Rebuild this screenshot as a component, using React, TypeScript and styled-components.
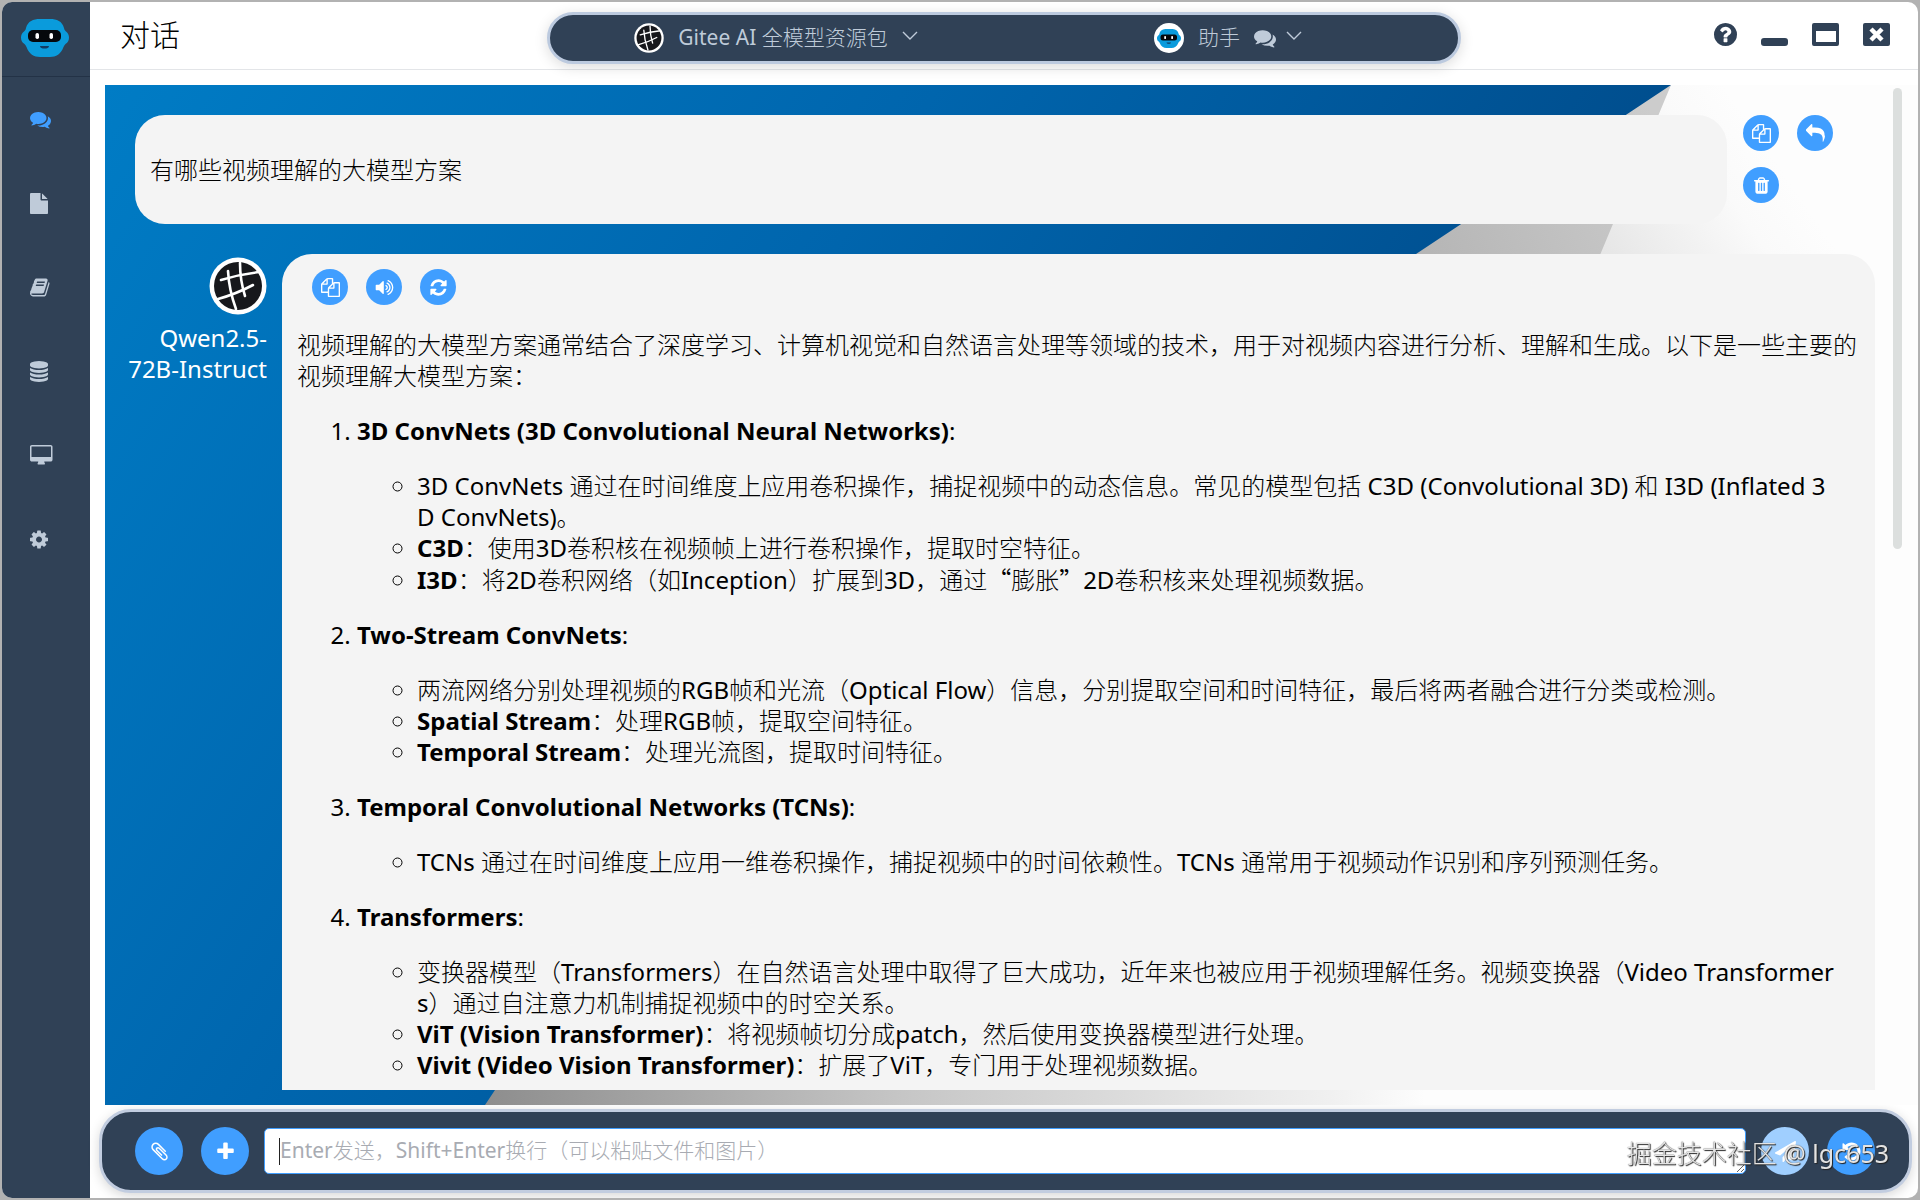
import React from "react";
import styled, { createGlobalStyle, css } from "styled-components";

const fontStack = `"Noto Sans", "Noto Sans CJK SC Light", "Noto Sans CJK SC DemiLight", "Noto Sans CJK SC", sans-serif`;

const GlobalStyle = createGlobalStyle`
  *, *::before, *::after { box-sizing: border-box; }
  body {
    margin: 0;
    background: #b2b2b2;
    font-family: ${fontStack};
    color: #000;
  }
  button, select, textarea { font-family: inherit; }
`;

/* ---------- icons ---------- */

const paths = {
  comments:
    "M1408 768q0 139-94 257t-256.5 186.5-353.5 68.5q-86 0-176-16-124 88-278 128-36 9-86 16h-3q-11 0-20.5-8t-11.5-21q-1-3-1-6.5t.5-6.5 2-6l2.5-5 3.5-5.5 4-5 4.5-5 4-4.5q5-6 23-25t26-29.5 22.5-29 25-38.5 20.5-44q-124-72-195-177t-71-224q0-139 94-257t256.5-186.5 353.5-68.5 353.5 68.5 256.5 186.5 94 257zm384 256q0 120-71 224.5t-195 176.5q10 24 20.5 44t25 38.5 22.5 29 26 29.5 23 25q1 1 4 4.5t4.5 5 4 5 3.5 5.5l2.5 5 2 6 .5 6.5-1 6.5q-3 14-13 22t-22 7q-50-7-86-16-154-40-278-128-90 16-176 16-271 0-472-132 58 4 88 4 161 0 309-45t264-129q125-92 192-212t67-254q0-77-23-152 129 71 204 178t75 230z",
  file:
    "M1152 512v-472q22 14 36 28l408 408q14 14 28 36h-472zm-128 32q0 40 28 68t68 28h544v1056q0 40-28 68t-68 28h-1344q-40 0-68-28t-28-68v-1600q0-40 28-68t68-28h800v544z",
  book:
    "M1703 478q40 57 18 129l-275 906q-19 64-76.5 107.5t-122.5 43.5h-923q-77 0-148.5-53.5t-99.5-131.5q-24-67-2-127 0-4 3-27t4-37q1-8-3-21.5t-3-19.5q2-11 8-21t16.5-23.5 16.5-23.5q23-38 45-91.5t30-91.5q3-10 .5-30t-.5-28q3-11 17-28t17-23q21-36 42-92t25-90q1-9-2.5-32t.5-28q4-13 22-30.5t22-22.5q19-26 42.5-84.5t27.5-96.5q1-8-3-25.5t-2-26.5q2-8 9-18t18-23 17-21q8-12 16.5-30.5t15-35 16-36 19.5-32 26.5-23.5 36-11.5 47.5 5.5l-1 3q38-9 51-9h761q74 0 114 56t18 130l-274 906q-36 119-71.5 153.5t-128.5 34.5h-869q-27 0-38 15-11 16-1 43 24 70 144 70h923q29 0 56-15.5t35-41.5l300-987q7-22 5-57 38 15 59 43zm-1064 2q-4 13 2 22.5t20 9.5h608q13 0 25.5-9.5t16.5-22.5l21-64q4-13-2-22.5t-20-9.5h-608q-13 0-25.5 9.5t-16.5 22.5zm-83 256q-4 13 2 22.5t20 9.5h608q13 0 25.5-9.5t16.5-22.5l21-64q4-13-2-22.5t-20-9.5h-608q-13 0-25.5 9.5t-16.5 22.5z",
  database:
    "M896 768q237 0 443-43t325-127v170q0 69-103 128t-280 93.5-385 34.5-385-34.5-280-93.5-103-128v-170q119 84 325 127t443 43zm0 768q237 0 443-43t325-127v170q0 69-103 128t-280 93.5-385 34.5-385-34.5-280-93.5-103-128v-170q119 84 325 127t443 43zm0-384q237 0 443-43t325-127v170q0 69-103 128t-280 93.5-385 34.5-385-34.5-280-93.5-103-128v-170q119 84 325 127t443 43zm0-1152q208 0 385 34.5t280 93.5 103 128v128q0 69-103 128t-280 93.5-385 34.5-385-34.5-280-93.5-103-128v-128q0-69 103-128t280-93.5 385-34.5z",
  desktop:
    "M1728 992v-832q0-13-9.5-22.5t-22.5-9.5h-1600q-13 0-22.5 9.5t-9.5 22.5v832q0 13 9.5 22.5t22.5 9.5h1600q13 0 22.5-9.5t9.5-22.5zm128-832v1088q0 66-47 113t-113 47h-544q0 37 16 77.5t32 71 16 43.5q0 26-19 45t-45 19h-512q-26 0-45-19t-19-45q0-14 16-44t32-70 16-78h-544q-66 0-113-47t-47-113v-1088q0-66 47-113t113-47h1600q66 0 113 47t47 113z",
  cog:
    "M1152 896q0-106-75-181t-181-75-181 75-75 181 75 181 181 75 181-75 75-181zm512-109v222q0 12-8 23t-20 13l-185 28q-19 54-39 91 35 50 107 138 10 12 10 25t-9 23q-27 37-99 108t-94 71q-12 0-26-9l-138-108q-44 23-91 38-16 136-29 186-7 28-36 28h-222q-14 0-24.5-8.5t-11.5-21.5l-28-184q-49-16-90-37l-141 107q-10 9-25 9-14 0-25-11-126-114-165-168-7-10-7-23 0-12 8-23 15-21 51-66.5t54-70.5q-27-50-41-99l-183-27q-13-2-21-12.5t-8-23.5v-222q0-12 8-23t19-13l186-28q14-46 39-92-40-57-107-138-10-12-10-24 0-10 9-23 26-36 98.5-107.5t94.5-71.5q13 0 26 10l138 107q44-23 91-38 16-136 29-186 7-28 36-28h222q14 0 24.5 8.5t11.5 21.5l28 184q49 16 90 37l142-107q9-9 24-9 13 0 25 10 129 119 165 170 7 8 7 22 0 12-8 23-15 21-51 66.5t-54 70.5q26 50 41 98l183 28q13 2 21 12.5t8 23.5z",
  copy:
    "M1696 384q40 0 68 28t28 68v1216q0 40-28 68t-68 28h-960q-40 0-68-28t-28-68v-288h-544q-40 0-68-28t-28-68v-672q0-40 20-88t48-76l408-408q28-28 76-48t88-20h416q40 0 68 28t28 68v328q68-40 128-40h416zm-544 213l-299 299h299v-299zm-640-384l-299 299h299v-299zm196 647l316-316v-416h-384v416q0 40-28 68t-68 28h-416v640h512v-256q0-40 20-88t48-76zm956 804v-1152h-384v416q0 40-28 68t-68 28h-416v640h896z",
  refresh:
    "M1639 1056q0 5-1 7-64 268-268 434.5t-478 166.5q-146 0-282.5-55t-243.5-157l-129 129q-19 19-45 19t-45-19-19-45v-448q0-26 19-45t45-19h448q26 0 45 19t19 45-19 45l-137 137q71 66 161 102t187 36q134 0 250-65t186-179q11-17 53-117 8-23 30-23h192q13 0 22.5 9.5t9.5 22.5zm25-800v448q0 26-19 45t-45 19h-448q-26 0-45-19t-19-45 19-45l138-138q-148-137-349-137-134 0-250 65t-186 179q-11 17-53 117-8 23-30 23h-199q-13 0-22.5-9.5t-9.5-22.5v-7q65-268 270-434.5t480-166.5q146 0 284 55.5t245 156.5l130-129q19-19 45-19t45 19 19 45z",
  volume:
    "M832 352v1088q0 26-19 45t-45 19-45-19l-333-333h-262q-26 0-45-19t-19-45v-384q0-26 19-45t45-19h262l333-333q19-19 45-19t45 19 19 45zm384 544q0 76-42.5 141.5t-112.5 93.5q-10 5-25 5-26 0-45-18.5t-19-45.5q0-21 12-35.5t29-25 34-23 29-36 12-56.5-12-56.5-29-36-34-23-29-25-12-35.5q0-27 19-45.5t45-18.5q15 0 25 5 70 27 112.5 93t42.5 142zm256 0q0 153-85 282.5t-225 188.5q-13 5-25 5-27 0-46-19t-19-45q0-39 39-59 56-29 76-44 74-54 115.5-135.5t41.5-173.5-41.5-173.5-115.5-135.5q-20-15-76-44-39-20-39-59 0-26 19-45t45-19q13 0 26 5 140 59 225 188.5t85 282.5zm256 0q0 230-127 422.5t-338 283.5q-13 5-26 5-26 0-45-19t-19-45q0-36 39-59 7-4 22.5-10.5t22.5-10.5q46-25 82-51 123-91 192-227t69-289-69-289-192-227q-36-26-82-51-7-4-22.5-10.5t-22.5-10.5q-39-23-39-59 0-26 19-45t45-19q13 0 26 5 211 91 338 283.5t127 422.5z",
  reply:
    "M1792 1120q0 166-127 451-3 7-10.5 24t-13.5 30-13 22q-12 17-28 17-15 0-23.5-10t-8.5-25q0-9 2.5-26.5t2.5-23.5q5-68 5-123 0-112-19.5-200.5t-54-153.5-89-112-115.5-79.5-141-45.5-155.5-22.5-181-8h-224v256q0 26-19 45t-45 19-45-19l-512-512q-19-19-19-45t19-45l512-512q19-19 45-19t45 19 19 45v256h224q713 0 875 403 53 134 53 333z",
  trash:
    "M704 1376v-704q0-14-9-23t-23-9h-64q-14 0-23 9t-9 23v704q0 14 9 23t23 9h64q14 0 23-9t9-23zm256 0v-704q0-14-9-23t-23-9h-64q-14 0-23 9t-9 23v704q0 14 9 23t23 9h64q14 0 23-9t9-23zm256 0v-704q0-14-9-23t-23-9h-64q-14 0-23 9t-9 23v704q0 14 9 23t23 9h64q14 0 23-9t9-23zm-544-992h448l-48-117q-7-9-17-11h-317q-10 2-17 11zm928 32v64q0 14-9 23t-23 9h-96v948q0 83-47 143.5t-113 60.5h-832q-66 0-113-58.5t-47-141.5v-952h-96q-14 0-23-9t-9-23v-64q0-14 9-23t23-9h309l70-167q15-37 54-63t79-26h320q40 0 79 26t54 63l70 167h309q14 0 23 9t9 23z",
  clip:
    "M1596 1385q0 117-79 196t-196 79q-135 0-235-100l-777-776q-113-115-113-271 0-159 110-270t269-111q158 0 273 113l605 606q10 10 10 22 0 16-30.5 46.5t-46.5 30.5q-13 0-23-10l-606-607q-79-77-181-77-106 0-179 75t-73 181q0 105 76 181l776 777q63 63 145 63 64 0 106-42t42-106q0-82-63-145l-581-581q-26-24-60-24-29 0-48 19t-19 48q0 32 25 59l410 410q10 10 10 22 0 16-31 47t-47 31q-12 0-22-10l-410-410q-63-61-63-149 0-82 57-139t139-57q88 0 149 63l581 581q100 98 100 235z",
  plus:
    "M1600 736v192q0 40-28 68t-68 28h-416v416q0 40-28 68t-68 28h-192q-40 0-68-28t-28-68v-416h-416q-40 0-68-28t-28-68v-192q0-40 28-68t68-28h416v-416q0-40 28-68t68-28h192q40 0 68 28t28 68v416h416q40 0 68 28t28 68z",
  plane:
    "M1764 11q33 24 27 64l-256 1536q-5 29-32 45-14 8-31 8-11 0-24-5l-453-185-242 295q-18 23-49 23-13 0-22-4-19-7-30.5-23.5t-11.5-36.5v-349l864-1059-1069 925-395-162q-37-14-40-55-2-40 32-59l1664-960q15-9 32-9 20 0 36 11z",
  undo:
    "M1664 896q0 156-61 298t-164 245-245 164-298 61q-172 0-327-72.5t-264-204.5q-7-10-6.5-22.5t8.5-20.5l137-138q10-9 25-9 16 2 23 12 73 95 179 147t225 52q104 0 198.5-40.5t163.5-109.5 109.5-163.5 40.5-198.5-40.5-198.5-109.5-163.5-163.5-109.5-198.5-40.5q-98 0-188 35.5t-160 101.5l137 138q31 30 14 69-17 40-59 40h-448q-26 0-45-19t-19-45v-448q0-42 40-59 39-17 69 14l130 129q107-101 244.5-156.5t284.5-55.5q156 0 298 61t245 164 164 245 61 298z",
  question:
    "M1024 1376v-192q0-14-9-23t-23-9h-192q-14 0-23 9t-9 23v192q0 14 9 23t23 9h192q14 0 23-9t9-23zm256-672q0-88-55.5-163t-138.5-116-170-41q-243 0-371 213-15 24 8 42l132 100q7 6 19 6 16 0 25-12 53-68 86-92 34-24 86-24 48 0 85.5 26t37.5 59q0 38-20 61t-68 45q-63 28-115.5 86.5t-52.5 125.5v36q0 14 9 23t23 9h192q14 0 23-9t9-23q0-19 21.5-49.5t54.5-49.5q32-18 49-28.5t46-35 44.5-48 28-60.5 12.5-81zm384 192q0 209-103 385.5t-279.5 279.5-385.5 103-385.5-103-279.5-279.5-103-385.5 103-385.5 279.5-279.5 385.5-103 385.5 103 279.5 279.5 103 385.5z",
};

type IconName = keyof typeof paths;

/* left edge and width of each glyph inside the 1792-unit em */
const glyphBox: Partial<Record<IconName, [number, number]>> = {
  file: [128, 1536],
  book: [64, 1664],
  database: [128, 1536],
  desktop: [-64, 1920],
  cog: [128, 1536],
};

const Glyph = styled.svg`
  display: block;
  fill: currentColor;
  flex: none;
`;

function Icon({ name, size = 21 }: { name: IconName; size?: number }) {
  const [left, width] = glyphBox[name] ?? [0, 1792];
  return (
    <Glyph
      aria-hidden="true"
      viewBox={`${left} 0 ${width} 1792`}
      width={(size * width) / 1792}
      height={size}
    >
      <path d={paths[name]} />
    </Glyph>
  );
}

function Robot({ width }: { width: number }) {
  return (
    <Glyph aria-hidden="true" viewBox="0 0 48 38" width={width} height={(width * 38) / 48}>
      <path
        d="M19 0h10c7 0 12 2 14 9 0 1 .5 2 1.500 3C47 14 48 16 48 18.500c0 3-1 5-3.500 6.500-1 1-1.500 2-2 3C40 35 35 38 29 38H19c-6 0-11-3-13.500-10-.5-1-1-2-2-3C1 23.500 0 21.500 0 18.500 0 16 1 14 3.500 12 4.500 11 5 10 5 9 7 2 12 0 19 0z"
        fill="#0a9bdc"
      />
      <rect x="7" y="11" width="33" height="12" rx="5" fill="#05080c" />
      <rect x="14.500" y="14" width="3.500" height="6" rx="1.700" fill="#fff" />
      <rect x="28.500" y="14" width="3.500" height="6" rx="1.700" fill="#fff" />
      <path d="M19 27h9c0 2-2 2.500-4.500 2.500S19 29 19 27z" fill="#123b63" />
    </Glyph>
  );
}

function GridLogo({ size }: { size: number }) {
  return (
    <Glyph aria-hidden="true" viewBox="-29 -29 58 58" width={size} height={size}>
      <circle r="28.500" fill="#fff" />
      <circle r="24" fill="#17181c" />
      <g fill="none" stroke="#fff" strokeWidth="2.600" strokeLinecap="round">
        <path d="M-10-15Q-9 4-2 23" />
        <path d="M2-23Q2-6 7 10" />
        <path d="M-17-6Q2-12 22-14" />
        <path d="M-20 13Q-2 8 15-1" />
      </g>
    </Glyph>
  );
}

function Chevron() {
  return (
    <Glyph aria-hidden="true" viewBox="0 0 16 14" width="16" height="14">
      <path d="M1 1l7 7 7-7" fill="none" stroke="currentColor" strokeWidth="1.400" />
    </Glyph>
  );
}

/* ---------- shell ---------- */

const Window = styled.div`
  display: grid;
  grid-template-columns: 88px minmax(0, 1fr);
  height: calc(100vh - 4px);
  margin: 2px;
  border-radius: 10px;
  overflow: hidden;
  background: #fff;
`;

const Sidebar = styled.aside`
  background: #304156;
  display: flex;
  flex-direction: column;
`;

const Brand = styled.div`
  height: 75px;
  padding: 17px 0 0 19px;
  border-bottom: 1px solid #233246;
`;

const Nav = styled.nav`
  display: flex;
  flex-direction: column;
`;

const NavButton = styled.button<{ $active?: boolean }>`
  height: 84px;
  padding: 0 0 0 28px;
  display: flex;
  align-items: center;
  border: 0;
  background: transparent;
  color: ${(p) => (p.$active ? "#409eff" : "#bfcbd9")};
`;

const Main = styled.main`
  display: flex;
  flex-direction: column;
  min-height: 0;
`;

const Header = styled.header`
  display: grid;
  grid-template-columns: 1fr 2fr 1fr;
  align-items: start;
  height: 68px;
  border-bottom: 1px solid #e3e5e8;
`;

const Title = styled.h1`
  margin: 0;
  padding-left: 30px;
  font-size: 30px;
  line-height: 66px;
  font-weight: 400;
`;

const Pill = styled.div`
  display: grid;
  grid-template-columns: 1fr 1fr;
  height: 52px;
  margin: 10px 0;
  padding-right: 4px;
  border: 3px solid #bccadf;
  border-radius: 26px;
  background: #304156;
  box-shadow: 0 3px 14px rgba(0, 0, 0, 0.14);
  color: #bfcbd9;
`;

const Picker = styled.label`
  display: flex;
  align-items: center;
  justify-content: center;
  gap: 14px;
`;

const Avatar = styled.span`
  width: 30px;
  height: 30px;
  border-radius: 50%;
  background: #fff;
  display: grid;
  place-items: center;
`;

const PickerTail = styled.span`
  display: flex;
  align-items: center;
  gap: 10px;
`;

const PickerSelect = styled.select`
  appearance: none;
  field-sizing: content;
  border: 0;
  padding: 0 0 2px;
  background: transparent;
  color: inherit;
  font-size: 21px;
  line-height: 30px;
`;

const WindowControls = styled.div`
  display: flex;
  justify-content: flex-end;
  align-items: center;
  gap: 24px;
  height: 65px;
  padding-right: 28px;
  color: #304156;
`;

const ControlButton = styled.button`
  border: 0;
  padding: 0;
  background: transparent;
  color: inherit;
`;

/* ---------- conversation ---------- */

const Conversation = styled.section`
  position: relative;
  flex: 1;
  min-height: 0;
  margin: 15px 0 4px 15px;
  padding: 0 16px 15px 0;
  display: flex;
  gap: 18px;
  overflow: hidden;
`;

const Artwork = styled.svg`
  position: absolute;
  inset: 0;
  width: 100%;
  height: 100%;
`;

const Messages = styled.div`
  position: relative;
  flex: 1;
  min-width: 0;
  padding: 30px 0 0 30px;
  display: flex;
  flex-direction: column;
  gap: 30px;
  overflow: hidden;
`;

const ScrollTrack = styled.div`
  position: relative;
  width: 9px;
  padding-top: 3px;
`;

const ScrollThumb = styled.div`
  height: 46%;
  border-radius: 5px;
  background: #dcdfde;
`;

const UserRow = styled.article`
  display: flex;
  gap: 16px;
  flex: none;
`;

const bubble = css`
  background: #f4f4f4;
  font-size: 24px;
  line-height: 31px;
  word-break: break-all;
`;

const UserBubble = styled.p`
  ${bubble}
  flex: 1;
  margin: 0;
  padding: 39px 15px;
  border-radius: 30px;
`;

const UserActions = styled.div`
  width: 132px;
  display: flex;
  flex-wrap: wrap;
  align-content: flex-start;
  gap: 16px 18px;
`;

const RoundButton = styled.button<{ $size?: number; $muted?: boolean }>`
  width: ${(p) => p.$size ?? 36}px;
  height: ${(p) => p.$size ?? 36}px;
  flex: none;
  display: grid;
  place-items: center;
  border: 0;
  padding: 0;
  border-radius: 50%;
  background: ${(p) => (p.$muted ? "#a0cfff" : "#409eff")};
  color: #fff;
`;

const AnswerRow = styled.article`
  display: flex;
  gap: 15px;
  flex: 1;
  min-height: 0;
`;

const Author = styled.div`
  width: 132px;
  flex: none;
  padding-top: 3px;
  display: flex;
  flex-direction: column;
  align-items: flex-end;
  gap: 7px;
`;

const AuthorName = styled.span`
  width: 150px;
  font-size: 24px;
  line-height: 31px;
  color: #fff;
  text-align: right;
`;

const AnswerBubble = styled.div`
  ${bubble}
  flex: 1;
  min-width: 0;
  padding: 15px 15px 0;
  border-radius: 30px 30px 0 0;
  overflow: hidden;

  p { margin: 0 0 24px; }
  ol, ul { margin: 0; padding-left: 60px; }
  ul { margin-bottom: 24px; list-style: circle; }
`;

const WideQuote = styled.span`
  font-family: "Noto Sans CJK SC", sans-serif;
`;

const AnswerActions = styled.div`
  display: flex;
  gap: 18px;
  padding: 0 15px;
  margin-bottom: 24px;
`;

/* ---------- composer ---------- */

const Composer = styled.form`
  display: flex;
  align-items: center;
  gap: 18px;
  margin: 0 6px 5px 9px;
  padding: 15px 34px 15px 33px;
  border: 3px solid #c2cde0;
  border-radius: 32px;
  background: #304156;
  box-shadow: 0 3px 12px rgba(0, 0, 0, 0.16);
`;

const Field = styled.div`
  position: relative;
  flex: 1;
  display: flex;
  margin: 0 -3px;
`;

const MessageBox = styled.textarea`
  flex: 1;
  height: 46px;
  padding: 5px 15px;
  border: 1px solid #409eff;
  border-radius: 5px;
  outline: 0;
  font-size: 21px;
  line-height: 32px;
  overflow: hidden;
  resize: vertical;
  &::placeholder { color: #a8abb2; }
`;

const Caret = styled.span`
  position: absolute;
  left: 15px;
  top: 10px;
  width: 1px;
  height: 27px;
  background: #222;
`;

const Watermark = styled.span`
  position: fixed;
  right: 31px;
  bottom: 29px;
  font-size: 25px;
  line-height: 36px;
  color: #e4e4e4;
  text-shadow: 1px 1px 1px #222, 0 0 1px #444;
  pointer-events: none;
`;

const navItems: { icon: IconName; label: string }[] = [
  { icon: "comments", label: "对话" },
  { icon: "file", label: "文件" },
  { icon: "book", label: "知识库" },
  { icon: "database", label: "数据" },
  { icon: "desktop", label: "桌面" },
  { icon: "cog", label: "设置" },
];

type Point = { term?: string; text: React.ReactNode };

const sections: { title: string; points: Point[] }[] = [
  {
    title: "3D ConvNets (3D Convolutional Neural Networks)",
    points: [
      {
        text: (
          <>
            3D ConvNets 通过在时间维度上应用卷积操作，捕捉视频中的动态信息。常见的模型包括 C3D (Convolutional 3D) 和 I3D (Inflated 3
            <br />D ConvNets)。
          </>
        ),
      },
      { term: "C3D", text: "：使用3D卷积核在视频帧上进行卷积操作，提取时空特征。" },
      {
        term: "I3D",
        text: (
          <>
            ：将2D卷积网络（如Inception）扩展到3D，通过<WideQuote>“</WideQuote>膨胀<WideQuote>”</WideQuote>
            2D卷积核来处理视频数据。
          </>
        ),
      },
    ],
  },
  {
    title: "Two-Stream ConvNets",
    points: [
      {
        text:
          "两流网络分别处理视频的RGB帧和光流（Optical Flow）信息，分别提取空间和时间特征，最后将两者融合进行分类或检测。",
      },
      { term: "Spatial Stream", text: "：处理RGB帧，提取空间特征。" },
      { term: "Temporal Stream", text: "：处理光流图，提取时间特征。" },
    ],
  },
  {
    title: "Temporal Convolutional Networks (TCNs)",
    points: [
      {
        text:
          "TCNs 通过在时间维度上应用一维卷积操作，捕捉视频中的时间依赖性。TCNs 通常用于视频动作识别和序列预测任务。",
      },
    ],
  },
  {
    title: "Transformers",
    points: [
      {
        text: (
          <>
            变换器模型（Transformers）在自然语言处理中取得了巨大成功，近年来也被应用于视频理解任务。视频变换器（Video Transformer
            <br />
            s）通过自注意力机制捕捉视频中的时空关系。
          </>
        ),
      },
      { term: "ViT (Vision Transformer)", text: "：将视频帧切分成patch，然后使用变换器模型进行处理。" },
      { term: "Vivit (Video Vision Transformer)", text: "：扩展了ViT，专门用于处理视频数据。" },
    ],
  },
];

function Backdrop() {
  return (
    <Artwork viewBox="0 0 1813 1020" preserveAspectRatio="none" aria-hidden="true">
      <defs>
        <linearGradient id="blue" gradientUnits="userSpaceOnUse" x1="0" y1="0" x2="1180" y2="760">
          <stop offset="0" stopColor="#007cc5" />
          <stop offset="0.5" stopColor="#0065ad" />
          <stop offset="1" stopColor="#004b8a" />
        </linearGradient>
        <linearGradient id="paper" gradientUnits="userSpaceOnUse" x1="1500" y1="170" x2="1660" y2="60">
          <stop offset="0" stopColor="#e6e6e6" />
          <stop offset="0.7" stopColor="#fafafa" />
          <stop offset="1" stopColor="#fdfdfd" />
        </linearGradient>
        <linearGradient id="shade" gradientUnits="userSpaceOnUse" x1="1300" y1="170" x2="1560" y2="60">
          <stop offset="0" stopColor="#b4b4b4" />
          <stop offset="1" stopColor="#cccccc" />
        </linearGradient>
        <linearGradient id="floor" x1="0" x2="1" y1="0" y2="0">
          <stop offset="0" stopColor="#8c8c8c" />
          <stop offset="0.45" stopColor="#c6c6c6" />
          <stop offset="0.9" stopColor="#f0f0f0" />
          <stop offset="1" stopColor="#fdfdfd" />
        </linearGradient>
      </defs>
      <rect width="1813" height="1020" fill="#fdfdfd" />
      <rect width="1770" height="230" fill="url(#paper)" />
      <path d="M1566 0L1495 170L1200 900H800V300z" fill="url(#shade)" />
      <rect x="370" y="900" width="950" height="120" fill="url(#floor)" />
      <rect x="1320" y="900" width="493" height="120" fill="#fdfdfd" />
      <path d="M0 0H1566L1311 169L500 700L390 1005L380 1020H0z" fill="url(#blue)" />
    </Artwork>
  );
}

export default function App() {
  return (
    <>
      <GlobalStyle />
      <Window>
        <Sidebar>
          <Brand>
            <Robot width={48} />
          </Brand>
          <Nav aria-label="主导航">
            {navItems.map((item, i) => (
              <NavButton key={item.icon} type="button" aria-label={item.label} $active={i === 0}>
                <Icon name={item.icon} />
              </NavButton>
            ))}
          </Nav>
        </Sidebar>

        <Main>
          <Header>
            <Title>对话</Title>
            <Pill>
              <Picker>
                <GridLogo size={30} />
                <PickerSelect aria-label="模型">
                  <option>Gitee AI 全模型资源包</option>
                </PickerSelect>
                <Chevron />
              </Picker>
              <Picker>
                <Avatar>
                  <Robot width={24} />
                </Avatar>
                <PickerSelect aria-label="助手">
                  <option>助手</option>
                </PickerSelect>
                <PickerTail>
                  <Icon name="comments" size={22} />
                  <Chevron />
                </PickerTail>
              </Picker>
            </Pill>
            <WindowControls>
              <ControlButton type="button" aria-label="帮助">
                <Glyph viewBox="128 128 1536 1536" width="23" height="23">
                  <path d={paths.question} />
                </Glyph>
              </ControlButton>
              <ControlButton type="button" aria-label="最小化">
                <Glyph viewBox="0 0 27 23" width="27" height="23">
                  <rect y="15" width="27" height="8" rx="3" />
                </Glyph>
              </ControlButton>
              <ControlButton type="button" aria-label="最大化">
                <Glyph viewBox="0 0 27 23" width="27" height="23">
                  <path fillRule="evenodd" d="M2 0h23q2 0 2 2v19q0 2-2 2H2q-2 0-2-2V2q0-2 2-2zM4 8v11h20V8z" />
                </Glyph>
              </ControlButton>
              <ControlButton type="button" aria-label="关闭">
                <Glyph viewBox="0 0 27 23" width="27" height="23">
                  <rect width="27" height="23" rx="2" />
                  <path d="M8 6l11 11M19 6l-11 11" stroke="#fff" strokeWidth="4.500" />
                </Glyph>
              </ControlButton>
            </WindowControls>
          </Header>

          <Conversation>
            <Backdrop />
            <Messages>
              <UserRow>
                <UserBubble>有哪些视频理解的大模型方案</UserBubble>
                <UserActions>
                  <RoundButton type="button" aria-label="复制">
                    <Icon name="copy" size={19} />
                  </RoundButton>
                  <RoundButton type="button" aria-label="撤回">
                    <Icon name="reply" size={19} />
                  </RoundButton>
                  <RoundButton type="button" aria-label="删除">
                    <Icon name="trash" size={19} />
                  </RoundButton>
                </UserActions>
              </UserRow>

              <AnswerRow>
                <Author>
                  <GridLogo size={58} />
                  <AuthorName>
                    Qwen2.5-
                    <br />
                    72B-Instruct
                  </AuthorName>
                </Author>
                <AnswerBubble>
                  <AnswerActions>
                    <RoundButton type="button" aria-label="复制">
                      <Icon name="copy" size={19} />
                    </RoundButton>
                    <RoundButton type="button" aria-label="朗读">
                      <Icon name="volume" size={19} />
                    </RoundButton>
                    <RoundButton type="button" aria-label="重新生成">
                      <Icon name="refresh" size={19} />
                    </RoundButton>
                  </AnswerActions>
                  <p>
                    视频理解的大模型方案通常结合了深度学习、计算机视觉和自然语言处理等领域的技术，用于对视频内容进行分析、理解和生成。以下是一些主要的视频理解大模型方案：
                  </p>
                  <ol>
                    {sections.map((section) => (
                      <li key={section.title}>
                        <p>
                          <strong>{section.title}</strong>:
                        </p>
                        <ul>
                          {section.points.map((point, i) => (
                            <li key={i}>
                              {point.term && <strong>{point.term}</strong>}
                              {point.text}
                            </li>
                          ))}
                        </ul>
                      </li>
                    ))}
                  </ol>
                </AnswerBubble>
              </AnswerRow>
            </Messages>
            <ScrollTrack>
              <ScrollThumb />
            </ScrollTrack>
          </Conversation>

          <Composer>
            <RoundButton type="button" $size={48} aria-label="附件">
              <Icon name="clip" size={21} />
            </RoundButton>
            <RoundButton type="button" $size={48} aria-label="新建">
              <Icon name="plus" size={21} />
            </RoundButton>
            <Field>
              <MessageBox
                aria-label="消息"
                rows={1}
                placeholder="Enter发送，Shift+Enter换行（可以粘贴文件和图片）"
              />
              <Caret />
            </Field>
            <RoundButton type="submit" $size={48} $muted aria-label="发送">
              <Icon name="plane" size={21} />
            </RoundButton>
            <RoundButton type="button" $size={48} aria-label="重置">
              <Icon name="undo" size={21} />
            </RoundButton>
          </Composer>
        </Main>
      </Window>
      <Watermark>掘金技术社区 @ lgc653</Watermark>
    </>
  );
}
